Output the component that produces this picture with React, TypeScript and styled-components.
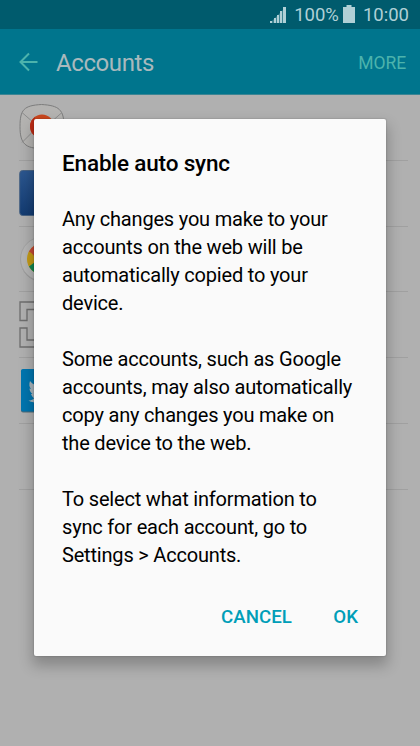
import React from 'react';
import styled, { createGlobalStyle } from 'styled-components';

const GlobalStyle = createGlobalStyle`
  * { box-sizing: border-box; }
  body { margin: 0; background: #b0b0b0; font-family: Roboto, sans-serif; overflow: hidden; }
`;

const Screen = styled.main`
  position: relative;
  width: 420px;
  height: 746px;
  display: flex;
  flex-direction: column;
  overflow: hidden;
  background: #b0b0b0;
`;

const StatusBar = styled.header`
  height: 29px;
  flex: none;
  display: flex;
  align-items: center;
  justify-content: flex-end;
  padding: 1px 11px 0 0;
  background: #005b6d;
  color: #b0d0d6;
  font-size: 18.5px;
  line-height: 28px;
`;

const SignalIcon = styled.svg`
  width: 16px;
  height: 16px;
  margin-right: 8.5px;
`;

const BatteryIcon = styled.svg`
  width: 12px;
  height: 18px;
  margin: 0 8px 2px 4px;
`;

const TitleBar = styled.nav`
  height: 66px;
  flex: none;
  display: flex;
  align-items: center;
  padding: 2px 14px 0 19px;
  background: #00758d;
  border-bottom: 1px solid #3b8594;
`;

const BackIcon = styled.svg`
  width: 19px;
  height: 20px;
  margin: 0 18px 2px 0;
`;

const Title = styled.h1`
  margin: 0;
  flex: 1;
  font-size: 24px;
  font-weight: 400;
  letter-spacing: -0.4px;
  color: #a9b9bd;
`;

const MoreButton = styled.button`
  padding: 0;
  border: 0;
  background: none;
  font: 400 17.5px Roboto, sans-serif;
  letter-spacing: -0.1px;
  color: #4cb3ac;
`;

const AccountList = styled.ul`
  list-style: none;
  margin: 0;
  padding: 0 12px 0 19px;
`;

const AccountRow = styled.li`
  height: 65.8px;
  padding-top: 8px;
  border-bottom: 1px solid #a0a0a0;
`;

const AccountIcon = styled.svg`
  display: block;
  width: 48px;
  height: 48px;
`;

const Dialog = styled.section`
  position: absolute;
  left: 34px;
  top: 119px;
  width: 352px;
  height: 537px;
  display: flex;
  flex-direction: column;
  padding: 30px 28px 23px;
  border-radius: 2px;
  background: #fafafa;
  box-shadow: 0 0 1px 1px rgba(0, 0, 0, 0.08), 0 8px 14px 2px rgba(0, 0, 0, 0.23);
`;

const DialogTitle = styled.h2`
  margin: 0 0 28px;
  font-size: 22.5px;
  line-height: 28px;
  font-weight: 500;
  letter-spacing: -0.16px;
  color: #000;
`;

const Paragraph = styled.p`
  margin: 0 0 28px;
  font-size: 20px;
  line-height: 28px;
  letter-spacing: -0.19px;
  color: #000;
  white-space: nowrap;
`;

const Actions = styled.footer`
  display: flex;
  justify-content: flex-end;
  gap: 41.5px;
  margin-top: auto;
`;

const ActionButton = styled.button`
  padding: 0;
  border: 0;
  background: none;
  font: 500 18.7px/32px Roboto, sans-serif;
  color: #009eb8;
`;

const EmailArt = () => (
  <AccountIcon viewBox="0 0 48 48" fill="none">
    <path d="M1 23.5C1 6.500 5 2.500 22.500 1.500C40 2.500 45 6.500 45 23.5C45 40.500 40 45.500 23 45.500C6 45.500 1 40.500 1 23.5Z" fill="#b4b3b1" stroke="#7d7d7d" />
    <path d="M3 9.500L19 23.500L3 39.500M43 9.500L27 23.500" stroke="#8c8c8c" />
    <circle cx="23" cy="23.500" r="12" fill="#c9471e" />
    <path d="M11 23.500a12 12 0 0 1 5-9.500v19A12 12 0 0 1 11 23.500" fill="#bb2a15" />
  </AccountIcon>
);

const FacebookArt = () => (
  <AccountIcon viewBox="0 0 48 48">
    <defs>
      <linearGradient id="facebookBlue" x1="0" y1="0" x2="0.25" y2="1">
        <stop stopColor="#2c5790" />
        <stop offset="1" stopColor="#123a70" />
      </linearGradient>
    </defs>
    <rect x="0.700" y="1.500" width="45" height="45" rx="3" fill="url(#facebookBlue)" stroke="#496383" />
  </AccountIcon>
);

const ChromeArt = () => (
  <AccountIcon viewBox="0 0 48 48">
    <circle cx="23.500" cy="25" r="22" fill="#939393" />
    <circle cx="23.500" cy="24" r="22" fill="#b5b5b5" stroke="#a3a3a3" />
    <circle cx="23.500" cy="24" r="15.500" fill="#c49a16" />
    <path d="M10 16.500a15.500 15.500 0 0 1 27 0L23.500 24Z" fill="#c44836" />
    <path d="M10.500 16L17 23V16Z" fill="#c44836" />
    <path d="M10 31.500a15.500 15.500 0 0 0 27 0L16 27Z" fill="#108650" />
  </AccountIcon>
);

const FrameArt = () => (
  <AccountIcon viewBox="0 0 48 48" fill="none" stroke="#6e6e6e" strokeWidth="1.3">
    <path d="M1 20.500V2H19V9.500H8V20.500ZM1 28H8V40H19V47H1Z" />
  </AccountIcon>
);

const TwitterArt = () => (
  <AccountIcon viewBox="0 0 48 48">
    <rect x="2" y="3.500" width="44" height="43" rx="2" fill="#516a76" />
    <rect x="2" y="3" width="44" height="42.500" rx="2" fill="#0075af" />
    <path d="M11 15C10 18 10 21 12 23L10.500 22.500C10.500 25 12 27 13.500 28H12C12.500 30 14 31 15 32.500C13 34 12 34.500 9.500 34.500C15 38 25 37 29 32C33 28 34 23 34 19L37 16H34C30 11 24 14 24 20C19 21 14 19 11 15Z" fill="#a9b6bd" />
  </AccountIcon>
);

const accounts = [
  { name: 'Email', Art: EmailArt },
  { name: 'Facebook', Art: FacebookArt },
  { name: 'Google', Art: ChromeArt },
  { name: 'Other', Art: FrameArt },
  { name: 'Twitter', Art: TwitterArt },
  { name: 'More', Art: null },
];

export default function App() {
  return (
    <>
      <GlobalStyle />
      <Screen>
        <StatusBar>
          <SignalIcon viewBox="0 0 16 16" fill="#b0d0d6">
            <path d="M0 16L16 0V16Z" opacity="0.35" />
            <path d="M0 14h2v2H0zM4 11h2v5H4zM7 8h2v8H7zM10 4h2v12h-2zM13 0h3v16h-3z" />
          </SignalIcon>
          <span>100%</span>
          <BatteryIcon viewBox="0 0 12 18" fill="#b0d0d6">
            <path d="M3.500 0h5v2H12v16H0V2h3.500z" />
          </BatteryIcon>
          <span>10:00</span>
        </StatusBar>
        <TitleBar>
          <BackIcon viewBox="0 0 19 20" fill="none" stroke="#4cb3ac" strokeWidth="2">
            <path d="M10 1.500L1.500 10L10 18.500M1.500 10H18.500" />
          </BackIcon>
          <Title>Accounts</Title>
          <MoreButton>MORE</MoreButton>
        </TitleBar>
        <AccountList>
          {accounts.map(({ name, Art }) => (
            <AccountRow key={name}>{Art && <Art />}</AccountRow>
          ))}
        </AccountList>
        <Dialog role="dialog">
          <DialogTitle>Enable auto sync</DialogTitle>
          <Paragraph>
            Any changes you make to your<br />
            accounts on the web will be<br />
            automatically copied to your<br />
            device.
          </Paragraph>
          <Paragraph>
            Some accounts, such as Google<br />
            accounts, may also automatically<br />
            copy any changes you make on<br />
            the device to the web.
          </Paragraph>
          <Paragraph>
            To select what information to<br />
            sync for each account, go to<br />
            Settings &gt; Accounts.
          </Paragraph>
          <Actions>
            <ActionButton>CANCEL</ActionButton>
            <ActionButton>OK</ActionButton>
          </Actions>
        </Dialog>
      </Screen>
    </>
  );
}
